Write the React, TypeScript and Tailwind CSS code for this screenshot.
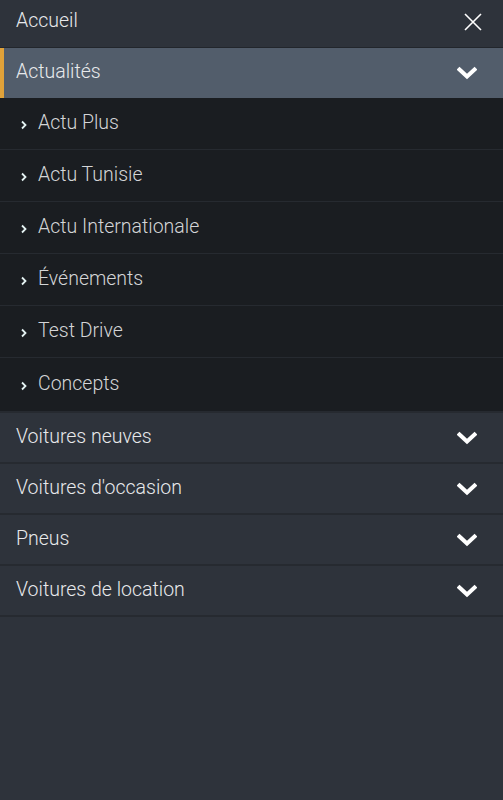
import React from "react";

const ChevronDown = () => (
  <svg width="20" height="14" viewBox="0 0 20 14" className="block">
    <path d="M2.5 3.5 L10 10.5 L17.5 3.5" fill="none" stroke="#ffffff" strokeWidth="4" strokeLinecap="square" strokeLinejoin="miter" />
  </svg>
);

const ChevronRight = () => (
  <svg width="8" height="10" viewBox="0 0 8 10" className="block">
    <path d="M2 1.5 L5.5 5 L2 8.5" fill="none" stroke="#e4f2f2" strokeWidth="1.8" />
  </svg>
);

const CloseIcon = () => (
  <svg width="20" height="20" viewBox="0 0 20 20" className="block">
    <path d="M2 2 L18 18 M18 2 L2 18" stroke="#ffffff" strokeWidth="1.6" fill="none" />
  </svg>
);

const subs = ["Actu Plus", "Actu Tunisie", "Actu Internationale", "Événements", "Test Drive", "Concepts"];
const mains = ["Voitures neuves", "Voitures d'occasion", "Pneus", "Voitures de location"];

export default function App() {
  return (
    <div
      className="w-[503px] h-[800px] bg-[#2e333b] text-[#e8e9eb] overflow-hidden"
      style={{ fontFamily: "Roboto, 'Noto Sans', sans-serif" }}
    >
      <div className="h-[48px] flex items-center justify-between pl-4 pr-[20px] border-b border-[#22262c] pb-[4px]">
        <span className="text-[19.5px] font-light mb-[2px]">Accueil</span>
        <CloseIcon />
      </div>
      <div className="h-[50px] flex items-center justify-between pl-[16px] pr-[26px] bg-[#525d6b] relative">
        <span className="absolute left-0 top-0 bottom-0 w-[4px] bg-[#e0a23a]" />
        <span className="text-[19.5px] font-light mb-[2px]">Actualités</span>
        <ChevronDown />
      </div>
      <div className="bg-[#1a1d21]">
        {subs.map((s) => (
          <div key={s} className="h-[52px] flex items-center pl-[20px] border-b border-[#262a30] last:border-b-0 last:h-[53px]">
            <span className="mt-[2px]"><ChevronRight /></span>
            <span className="ml-[10px] text-[19.5px] font-light text-[#d4d5d7] mb-[2px]">{s}</span>
          </div>
        ))}
      </div>
      {mains.map((m) => (
        <div key={m} className="h-[51px] flex items-center justify-between pl-4 pr-[26px] border-t-[2px] border-[#262a30] last:border-b-[2px] last:h-[53px]">
          <span className="text-[19.5px] font-light mb-[2px]">{m}</span>
          <ChevronDown />
        </div>
      ))}
    </div>
  );
}
